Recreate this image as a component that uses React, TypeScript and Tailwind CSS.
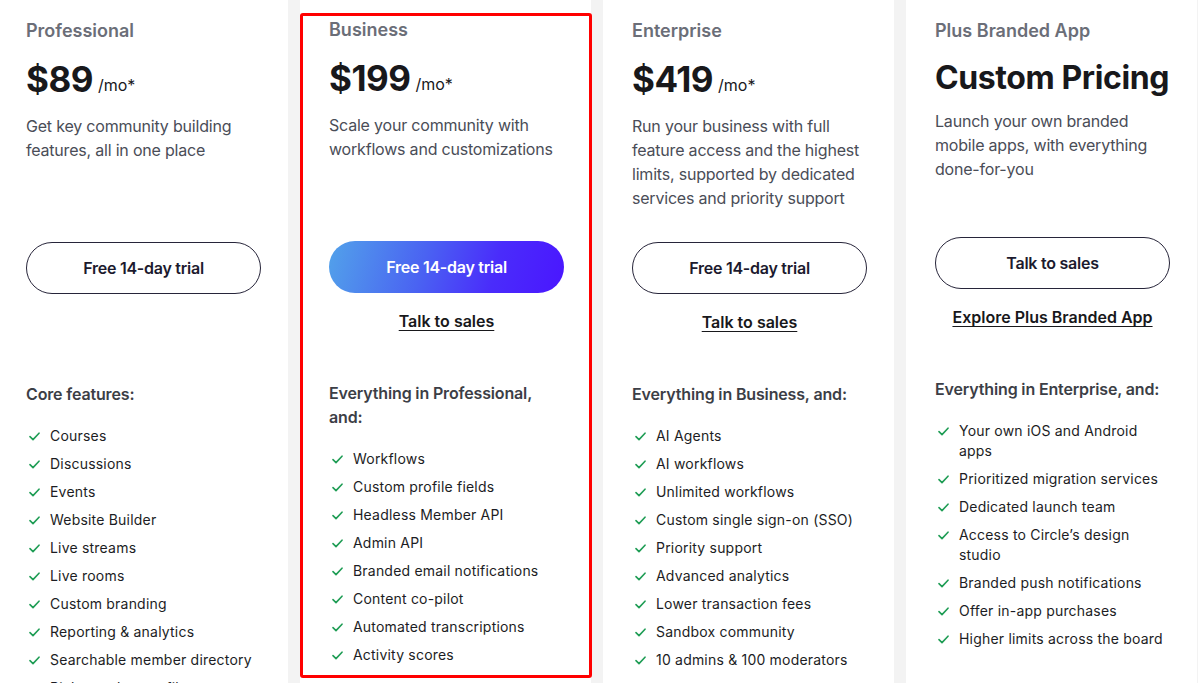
import React from "react";

type Plan = {
  name: string;
  price: string;
  perMonth: boolean;
  desc: string;
  primary: { label: string; gradient?: boolean };
  link?: string;
  heading: string;
  items: string[];
  highlight?: boolean;
};

const plans: Plan[] = [
  {
    name: "Professional",
    price: "$89",
    perMonth: true,
    desc: "Get key community building features, all in one place",
    primary: { label: "Free 14-day trial" },
    heading: "Core features:",
    items: [
      "Courses",
      "Discussions",
      "Events",
      "Website Builder",
      "Live streams",
      "Live rooms",
      "Custom branding",
      "Reporting & analytics",
      "Searchable member directory",
      "Rich member profiles",
    ],
  },
  {
    name: "Business",
    price: "$199",
    perMonth: true,
    desc: "Scale your community with workflows and customizations",
    primary: { label: "Free 14-day trial", gradient: true },
    link: "Talk to sales",
    heading: "Everything in Professional, and:",
    items: [
      "Workflows",
      "Custom profile fields",
      "Headless Member API",
      "Admin API",
      "Branded email notifications",
      "Content co-pilot",
      "Automated transcriptions",
      "Activity scores",
    ],
    highlight: true,
  },
  {
    name: "Enterprise",
    price: "$419",
    perMonth: true,
    desc: "Run your business with full feature access and the highest limits, supported by dedicated services and priority support",
    primary: { label: "Free 14-day trial" },
    link: "Talk to sales",
    heading: "Everything in Business, and:",
    items: [
      "AI Agents",
      "AI workflows",
      "Unlimited workflows",
      "Custom single sign-on (SSO)",
      "Priority support",
      "Advanced analytics",
      "Lower transaction fees",
      "Sandbox community",
      "10 admins & 100 moderators",
    ],
  },
  {
    name: "Plus Branded App",
    price: "Custom Pricing",
    perMonth: false,
    desc: "Launch your own branded mobile apps, with everything done-for-you",
    primary: { label: "Talk to sales" },
    link: "Explore Plus Branded App",
    heading: "Everything in Enterprise, and:",
    items: [
      "Your own iOS and Android apps",
      "Prioritized migration services",
      "Dedicated launch team",
      "Access to Circle\u2019s design studio",
      "Branded push notifications",
      "Offer in-app purchases",
      "Higher limits across the board",
    ],
  },
];

function Check() {
  return (
    <span className="flex w-4 shrink-0 justify-center pt-[6px]">
      <svg width="11" height="9" viewBox="0 0 11 9" fill="none">
        <path
          d="M1 4.6 L4 7.6 L10 1.2"
          stroke="#1f9d55"
          strokeWidth="1.6"
          strokeLinecap="round"
          strokeLinejoin="round"
        />
      </svg>
    </span>
  );
}

function Card({ plan }: { plan: Plan }) {
  return (
    <div
      className={`relative w-[291px] shrink-0 bg-white pl-[29px] pr-[27px] ${
        plan.highlight ? "pt-[16px]" : "pt-[17px]"
      }`}
    >
      {plan.highlight && (
        <div className="pointer-events-none absolute left-0 top-[13px] h-[665px] w-[292px] rounded-[3px] border-[3px] border-[#ff0000]" />
      )}
      <div className="w-[235px]">
        <div className="text-[18px] font-semibold leading-[28px] text-[#6b6e78]">{plan.name}</div>
        {plan.perMonth ? (
          <div className="mt-[14px] flex h-[40px] items-end">
            <span className="text-[35px] font-bold leading-[40px] tracking-[-0.5px] text-[#18181b]">
              {plan.price}
            </span>
            <span className="mb-[2px] ml-[5px] text-[16px] leading-[24px] text-[#18181b]">/mo*</span>
          </div>
        ) : (
          <div className="mt-[14px] h-[35px] whitespace-nowrap text-[32px] font-bold leading-[38px] tracking-[-0.4px] text-[#18181b]">
            {plan.price}
          </div>
        )}
        <p className="mt-[15px] min-h-[96px] text-[16px] leading-[24px] tracking-[-0.2px] text-[#4a4d57]">
          {plan.desc}
        </p>
        <div className="mt-[32px]">
          {plan.primary.gradient ? (
            <button className="flex h-[52px] w-[235px] items-center justify-center rounded-full bg-[linear-gradient(105deg,#52a2ea_0%,#4a63f2_40%,#4a2cfb_70%,#4a16ff_100%)] text-[16px] font-semibold tracking-[-0.25px] text-white">
              {plan.primary.label}
            </button>
          ) : (
            <button className="flex h-[52px] w-[235px] items-center justify-center rounded-full border border-[#27253a] bg-white text-[16px] font-semibold tracking-[-0.25px] text-[#1c1a2e]">
              {plan.primary.label}
            </button>
          )}
        </div>
        <div className="mt-[16px] h-[24px] text-center">
          {plan.link && (
            <a className="text-[16px] font-semibold leading-[24px] text-[#18181b] underline underline-offset-[3px]">
              {plan.link}
            </a>
          )}
        </div>
        <div className="mt-[48px] text-[16px] font-semibold leading-[24px] tracking-[-0.15px] text-[#3c3e46]">
          {plan.heading}
        </div>
        <ul className="mt-[20px] flex flex-col gap-[8px]">
          {plan.items.map((it) => (
            <li key={it} className="flex gap-[8px] text-[14px] leading-[20px] tracking-[0.2px] text-[#1c1d24]">
              <Check />
              <span className="max-w-[210px]">{it}</span>
            </li>
          ))}
        </ul>
      </div>
    </div>
  );
}

export default function App() {
  return (
    <div
      className="h-[683px] w-[1198px] overflow-hidden bg-[#f3f3f3]"
      style={{ fontFamily: "Inter, 'Noto Sans', sans-serif" }}
    >
      <div className="ml-[-3px] flex h-full gap-[12px]">
        {plans.map((p) => (
          <Card key={p.name} plan={p} />
        ))}
      </div>
    </div>
  );
}
